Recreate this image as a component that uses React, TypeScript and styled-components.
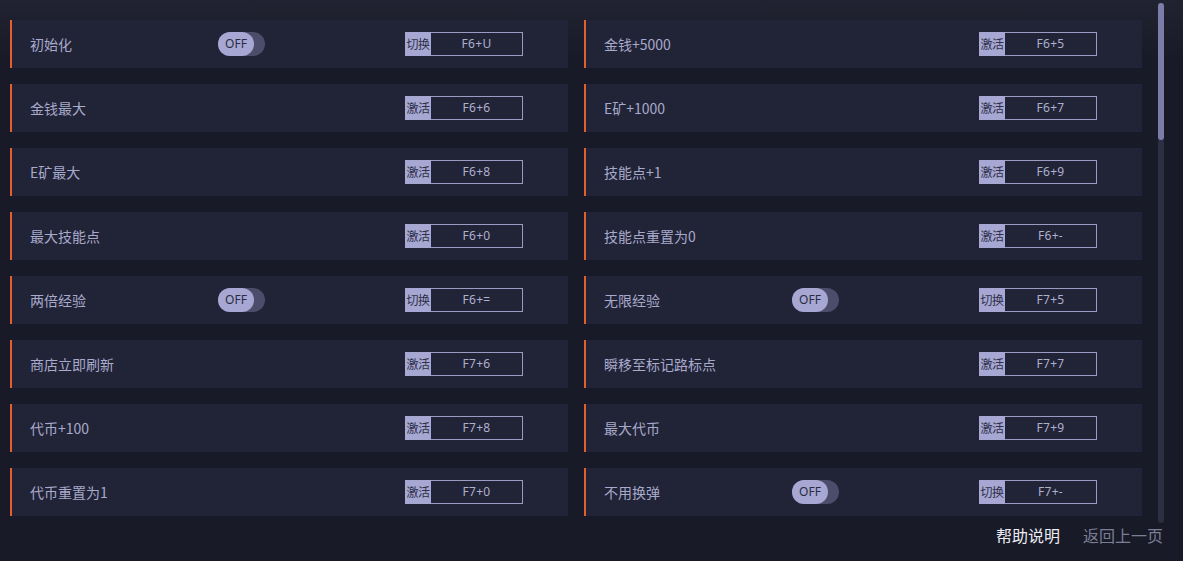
import React from "react";
import styled, { createGlobalStyle } from "styled-components";

const Global = createGlobalStyle`
  html, body { margin: 0; padding: 0; }
  body {
    width: 1183px; height: 561px; overflow: hidden;
    background: #181a27;
    font-family: "Noto Sans CJK SC", "Noto Sans", sans-serif;
  }
`;

const Page = styled.div`
  position: relative;
  width: 1183px;
  height: 561px;
  background:
    linear-gradient(180deg, rgba(40,42,58,0.55) 0px, rgba(24,26,39,0) 60px),
    #181a27;
  display: flex;
  flex-direction: column;
`;

const Grid = styled.div`
  display: grid;
  grid-template-columns: 558px 558px;
  grid-auto-rows: 48px;
  column-gap: 16px;
  row-gap: 16px;
  padding: 20px 0 0 10px;
`;

const Card = styled.div`
  display: grid;
  grid-template-columns: 188px 187px 118px;
  align-items: center;
  background: #212337;
  border-left: 2px solid #e2602e;
  padding-left: 18px;
`;

const Name = styled.span`
  color: #a8aacb;
  font-size: 14px;
  white-space: nowrap;
`;

const Toggle = styled.div`
  position: relative;
  width: 47px;
  height: 24px;
  border-radius: 12px;
  background: #4b4d6a;
`;

const Knob = styled.span`
  position: absolute;
  left: 0;
  top: 0;
  width: 36px;
  height: 24px;
  border-radius: 12px;
  background: #a6a8d3;
  color: #2a2c42;
  font-family: "Noto Sans", sans-serif;
  font-size: 12px;
  line-height: 24px;
  text-align: center;
`;

const Hotkey = styled.div`
  display: flex;
  height: 24px;
  box-sizing: border-box;
  border: 1px solid #9a9cc4;
`;

const KeyLabel = styled.span`
  width: 26px;
  margin: -1px 0 -1px -1px;
  background: #a6a8d3;
  color: #2e3048;
  font-size: 12px;
  line-height: 24px;
  text-align: center;
  white-space: nowrap;
  letter-spacing: -0.5px;
`;

const KeyValue = styled.span`
  flex: 1;
  color: #aeb0ce;
  font-family: "Noto Sans", sans-serif;
  font-size: 12px;
  line-height: 22px;
  text-align: center;
  letter-spacing: 0.3px;
`;

const Footer = styled.div`
  display: flex;
  justify-content: flex-end;
  gap: 23px;
  padding: 7px 20px 0 0;
  font-size: 16px;
`;

const FooterLink = styled.span<{ $active?: boolean }>`
  color: ${(p) => (p.$active ? "#ececf4" : "#7c7e96")};
`;

const ScrollTrack = styled.div`
  position: absolute;
  left: 1158px;
  top: 3px;
  width: 6px;
  height: 520px;
  border-radius: 3px;
  background: #2c2e42;
`;

const ScrollThumb = styled.div`
  width: 6px;
  height: 137px;
  border-radius: 3px;
  background: #7b7da8;
`;

type Item = { name: string; toggle?: boolean; key: string };

const items: Item[] = [
  { name: "初始化", toggle: true, key: "F6+U" },
  { name: "金钱+5000", key: "F6+5" },
  { name: "金钱最大", key: "F6+6" },
  { name: "E矿+1000", key: "F6+7" },
  { name: "E矿最大", key: "F6+8" },
  { name: "技能点+1", key: "F6+9" },
  { name: "最大技能点", key: "F6+0" },
  { name: "技能点重置为0", key: "F6+-" },
  { name: "两倍经验", toggle: true, key: "F6+=" },
  { name: "无限经验", toggle: true, key: "F7+5" },
  { name: "商店立即刷新", key: "F7+6" },
  { name: "瞬移至标记路标点", key: "F7+7" },
  { name: "代币+100", key: "F7+8" },
  { name: "最大代币", key: "F7+9" },
  { name: "代币重置为1", key: "F7+0" },
  { name: "不用换弹", toggle: true, key: "F7+-" },
];

export default function App() {
  return (
    <Page>
      <Global />
      <Grid>
        {items.map((it) => (
          <Card key={it.name}>
            <Name>{it.name}</Name>
            <div>
              {it.toggle && (
                <Toggle>
                  <Knob>OFF</Knob>
                </Toggle>
              )}
            </div>
            <Hotkey>
              <KeyLabel>{it.toggle ? "切换" : "激活"}</KeyLabel>
              <KeyValue>{it.key}</KeyValue>
            </Hotkey>
          </Card>
        ))}
      </Grid>
      <Footer>
        <FooterLink $active>帮助说明</FooterLink>
        <FooterLink>返回上一页</FooterLink>
      </Footer>
      <ScrollTrack>
        <ScrollThumb />
      </ScrollTrack>
    </Page>
  );
}
